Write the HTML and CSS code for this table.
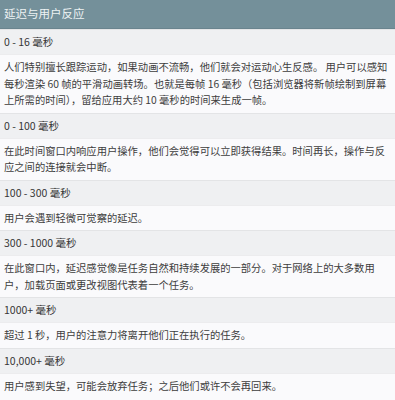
FILE: index.html
```html
<!DOCTYPE html>
<html lang="zh-CN">
<head>
<meta charset="utf-8">
<link rel="stylesheet" href="styles.css">
</head>
<body>
<div class="table">
  <div class="head">延迟与用户反应</div>
  <div class="label">0 - 16 毫秒</div>
  <div class="desc">人们特别擅长跟踪运动，如果动画不流畅，他们就会对运动心生反感。 用户可以感知<br>每秒渲染 60 帧的平滑动画转场。也就是每帧 16 毫秒（包括浏览器将新帧绘制到屏幕<br>上所需的时间），留给应用大约 10 毫秒的时间来生成一帧。</div>
  <div class="label">0 - 100 毫秒</div>
  <div class="desc">在此时间窗口内响应用户操作，他们会觉得可以立即获得结果。时间再长，操作与反<br>应之间的连接就会中断。</div>
  <div class="label">100 - 300 毫秒</div>
  <div class="desc">用户会遇到轻微可觉察的延迟。</div>
  <div class="label">300 - 1000 毫秒</div>
  <div class="desc">在此窗口内，延迟感觉像是任务自然和持续发展的一部分。对于网络上的大多数用<br>户，加载页面或更改视图代表着一个任务。</div>
  <div class="label">1000+ 毫秒</div>
  <div class="desc">超过 1 秒，用户的注意力将离开他们正在执行的任务。</div>
  <div class="label">10,000+ 毫秒</div>
  <div class="desc">用户感到失望，可能会放弃任务；之后他们或许不会再回来。</div>
</div>
</body>
</html>
```

FILE: styles.css
```css
html, body {
  margin: 0;
  padding: 0;
  background: #fafafc;
}
.table {
  width: 395px;
  font-family: "Noto Sans CJK SC", "Noto Sans", sans-serif;
  color: #3d3d3d;
}
.head {
  height: 28px;
  line-height: 26px;
  padding: 0 4px;
  background: #74909a;
  color: #eef3f4;
  font-size: 11.5px;
  border-bottom: 1px solid #6a848e;
}
.label {
  height: 24px;
  line-height: 24px;
  padding: 0 4px;
  background: #eff0f2;
  border-top: 1px solid #e3e4e6;
  font-size: 10.5px;
  color: #363636;
}
.desc {
  padding: 4px 4px;
  line-height: 16.5px;
  font-size: 10.3px;
  background: #fafafc;
  border-top: 1px solid #ececee;
  white-space: nowrap;
}
```
